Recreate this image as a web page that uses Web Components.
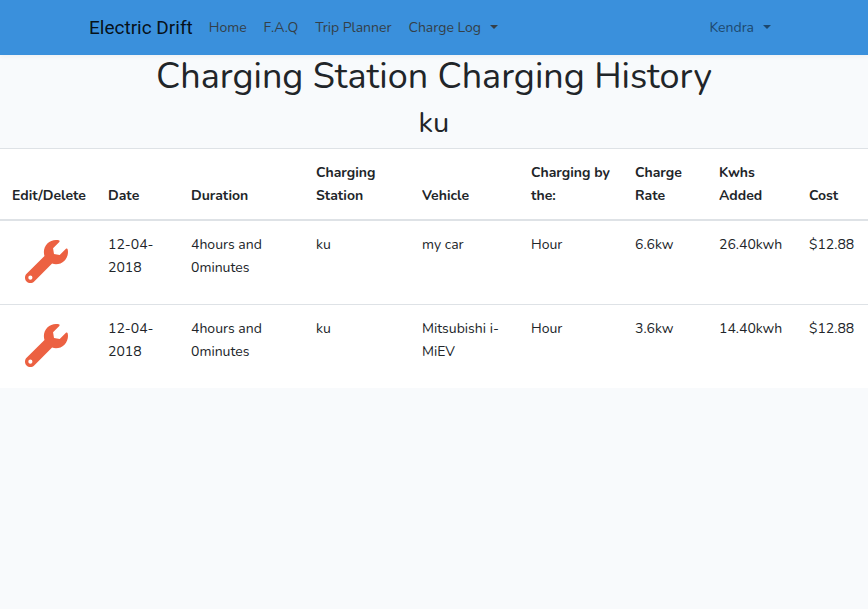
<!DOCTYPE html>
<html lang="en">
<head>
<meta charset="utf-8">
<title>Electric Drift</title>
<style>
  body {
    margin: 0;
    background: #f8fafc;
    color: #212529;
    font: 14px/23px Nunito, Lato, sans-serif;
  }
</style>
</head>
<body>
<site-header>
  <nav-link href="#home">Home</nav-link>
  <nav-link href="#faq">F.A.Q</nav-link>
  <nav-link href="#trip">Trip Planner</nav-link>
  <nav-menu>Charge Log</nav-menu>
  <nav-menu slot="account" class="account">Kendra</nav-menu>
</site-header>
<main>
  <page-title><span>Charging Station Charging History</span><span slot="station">ku</span></page-title>
  <charge-history></charge-history>
</main>

<script>
class BaseElement extends HTMLElement {
  constructor() {
    super();
    this.attachShadow({ mode: "open" }).innerHTML = this.template();
  }
}

customElements.define("site-header", class extends BaseElement {
  template() {
    return `<style>
      :host { display: block; position: relative; background: #3a90dc; box-shadow: 0 2px 4px rgba(0,0,0,.04); }
      nav { display: flex; align-items: center; box-sizing: border-box; max-width: 720px; min-height: 55px; margin: 0 auto; padding: 8px 15px; }
      .brand { margin-right: 8px; color: rgba(0,0,0,.9); font: 19px/30px Roboto, sans-serif; text-decoration: none; white-space: nowrap; }
      .links { display: flex; flex: 1; gap: 1px; }
    </style>
    <nav aria-label="Main">
      <a class="brand" href="#top">Electric Drift</a>
      <div class="links"><slot></slot></div>
      <slot name="account"></slot>
    </nav>`;
  }
});

customElements.define("nav-link", class extends BaseElement {
  template() {
    return `<style>
      :host { display: block; }
      a { display: block; padding: 8px; color: #343f48; text-decoration: none; white-space: nowrap; }
    </style><a><slot></slot></a>`;
  }
  connectedCallback() {
    this.shadowRoot.querySelector("a").href = this.getAttribute("href");
  }
});

customElements.define("nav-menu", class extends BaseElement {
  template() {
    return `<style>
      :host { display: block; color: #343f48; }
      :host(.account) { color: #1d486e; }
      button { display: flex; align-items: center; gap: 9px; padding: 8px; border: 0; background: none; color: inherit; font: inherit; white-space: nowrap; cursor: pointer; }
      button::after { content: ""; margin-bottom: 2px; border: 4px solid transparent; border-top-color: currentColor; border-bottom: 0; }
    </style><button type="button" aria-haspopup="true"><slot></slot></button>`;
  }
});

customElements.define("page-title", class extends BaseElement {
  template() {
    return `<style>
      :host { display: block; text-align: center; }
      h1, h2 { margin: 0 0 8px; font-weight: 400; }
      h1 { font-size: 36px; line-height: 43px; }
      h2 { font-size: 29px; line-height: 34px; }
    </style><h1><slot></slot></h1><h2><slot name="station"></slot></h2>`;
  }
});

customElements.define("wrench-icon", class extends BaseElement {
  template() {
    return `<style>
      :host { display: block; width: 43px; height: 43px; color: #ec6142; }
      svg { display: block; }
    </style><svg viewBox="0 0 512 512" fill="currentColor" aria-hidden="true"><path d="M507.73 109.1c-2.24-9.03-13.54-12.09-20.12-5.51l-74.36 74.36-67.88-11.31-11.31-67.88 74.36-74.36c6.62-6.62 3.43-17.9-5.66-20.16-47.38-11.74-99.55.91-136.58 37.93-39.64 39.64-50.55 97.1-34.05 147.2L18.74 402.76c-24.99 24.99-24.99 65.51 0 90.5 24.99 24.99 65.51 24.99 90.5 0l213.21-213.21c50.12 16.71 107.47 5.68 147.37-34.22 37.07-37.07 49.7-89.32 37.91-136.73zM64 472c-13.25 0-24-10.75-24-24 0-13.26 10.75-24 24-24s24 10.74 24 24c0 13.25-10.75 24-24 24z"/></svg>`;
  }
});

customElements.define("charge-history", class extends BaseElement {
  template() {
    const columns = [
      ["Edit/Delete", 96], ["Date", 83], ["Duration", 125], ["Charging Station", 106], ["Vehicle", 109],
      ["Charging by the:", 104], ["Charge Rate", 84], ["Kwhs Added", 90], ["Cost", 71]
    ];
    const rows = [
      ["12-04-2018", "4hours and 0minutes", "ku", "my car", "Hour", "6.6kw", "26.40kwh", "$12.88"],
      ["12-04-2018", "4hours and 0minutes", "ku", "Mitsubishi i-MiEV", "Hour", "3.6kw", "14.40kwh", "$12.88"]
    ];
    return `<style>
      :host { display: block; }
      table { width: 100%; table-layout: fixed; border-collapse: collapse; background: #fff; }
      th, td { padding: 12px; border-top: 1px solid #dee2e6; text-align: left; vertical-align: top; }
      th { vertical-align: bottom; border-bottom: 2px solid #dee2e6; }
      button { display: block; padding: 7px 13px 9px; border: 0; background: none; cursor: pointer; }
    </style>
    <table>
      <colgroup>${columns.map(([, w]) => `<col style="width:${w}px">`).join("")}</colgroup>
      <thead><tr>${columns.map(([name]) => `<th scope="col">${name}</th>`).join("")}</tr></thead>
      <tbody>${rows.map(row => `<tr><td><button type="button" aria-label="Edit or delete"><wrench-icon></wrench-icon></button></td>${row.map(cell => `<td>${cell}</td>`).join("")}</tr>`).join("")}</tbody>
    </table>`;
  }
});
</script>
</body>
</html>
